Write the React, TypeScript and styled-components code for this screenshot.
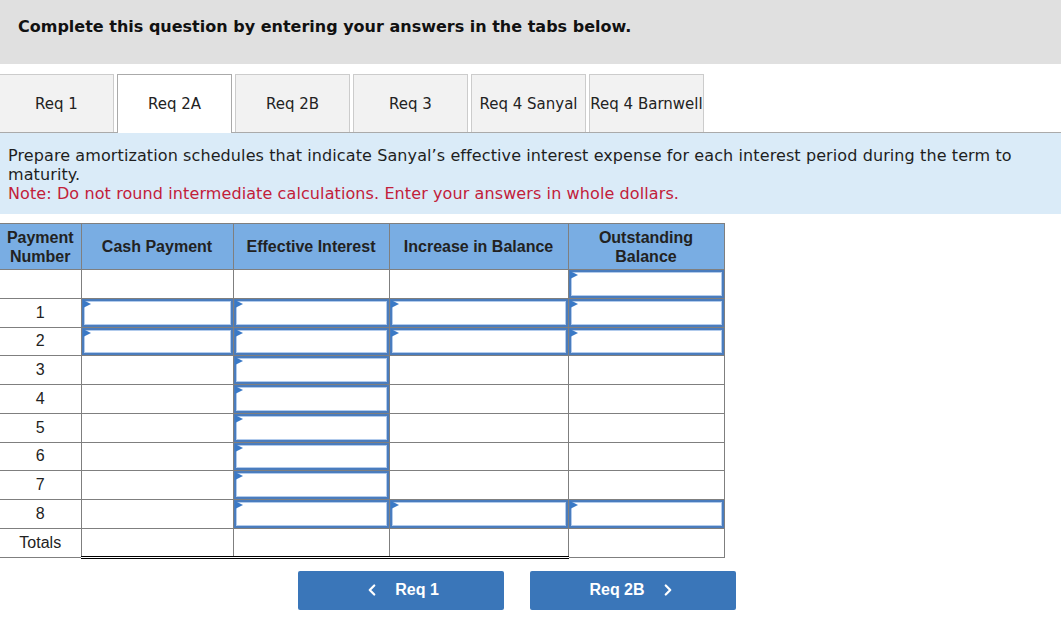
import React from "react";
import styled, { createGlobalStyle, css } from "styled-components";
import { ChevronLeft, ChevronRight } from "lucide-react";

const GlobalStyle = createGlobalStyle`
  html, body { margin: 0; padding: 0; background: #fff; }
  body { font-family: "DejaVu Sans", Verdana, sans-serif; color: #222; }
  * { box-sizing: border-box; }
`;

const Header = styled.div`
  background: #e0e0e0;
  height: 64px;
  padding: 17px 18px 0;
`;

const Title = styled.h1`
  margin: 0;
  font-family: "DejaVu Sans", Verdana, sans-serif;
  font-size: 16px;
  line-height: 20px;
  font-weight: bold;
  color: #111;
`;

const TabBar = styled.div`
  display: flex;
  gap: 3px;
  margin-top: 10px;
  margin-left: -1px;
  height: 59px;
  border-bottom: 1px solid #aaa;
`;

const Tab = styled.div<{ $active?: boolean }>`
  width: 115px;
  height: 58px;
  display: flex;
  align-items: center;
  justify-content: center;
  font-size: 15px;
  color: #222;
  white-space: nowrap;
  border: 1px solid #ccc;
  border-bottom: none;
  background: #f2f2f2;
  ${(p) =>
    p.$active &&
    css`
      background: #fff;
      border-color: #aaa;
      height: 59px;
    `}
`;

const Instructions = styled.div`
  background: #daebf8;
  padding: 13px 8px 11px 8px;
  font-size: 16px;
  line-height: 19px;
  letter-spacing: 0.1px;
  color: #1e1e1e;
`;

const Note = styled.div`
  color: #c2203a;
`;

const Table = styled.table`
  margin-top: 9px;
  border-collapse: collapse;
  table-layout: fixed;
  font-family: "Liberation Sans", Arial, sans-serif;
  width: 724px;
`;

const Th = styled.th`
  background: #79ade3;
  border: 1px solid #7f7f7f;
  height: 46px;
  font-size: 16px;
  font-weight: bold;
  color: #222;
  line-height: 19px;
  padding: 0 2px;
  &:first-child { border-left: none; }
`;

const Td = styled.td<{ $total?: boolean }>`
  border: 1px solid #7f7f7f;
  height: 28.75px;
  padding: 0;
  font-size: 16px;
  color: #222;
  text-align: center;
  vertical-align: middle;
  &:first-child { border-left: none; }
  ${(p) =>
    p.$total &&
    css`
      border-top: 1px solid #000;
      border-bottom: 3px double #000;
    `}
`;

const Field = styled.div`
  position: relative;
  height: 27.75px;
  border: 2px solid #4a7cbd;
  box-shadow: inset 0 0 0 1px #b2cbec;
  background: #fff;
`;

const Flag = styled.span`
  position: absolute;
  top: -1px;
  left: -1px;
  width: 0;
  height: 0;
  border-top: 4.5px solid transparent;
  border-bottom: 4.5px solid transparent;
  border-left: 8px solid #3a79c6;
`;

const Nav = styled.div`
  display: flex;
  gap: 26px;
  margin: 12px 0 0 298px;
`;

const NavButton = styled.button`
  width: 206px;
  height: 39px;
  border: none;
  border-radius: 2px;
  background: #3a76b9;
  color: #fff;
  font-family: "Liberation Sans", Arial, sans-serif;
  font-weight: bold;
  font-size: 16px;
  display: flex;
  align-items: center;
  justify-content: center;
  gap: 14px;
  cursor: pointer;
`;

const Input = () => (
  <Field>
    <Flag />
  </Field>
);

type RowSpec = { label: string; cells: boolean[] };

const rows: RowSpec[] = [
  { label: "", cells: [false, false, false, true] },
  { label: "1", cells: [true, true, true, true] },
  { label: "2", cells: [true, true, true, true] },
  { label: "3", cells: [false, true, false, false] },
  { label: "4", cells: [false, true, false, false] },
  { label: "5", cells: [false, true, false, false] },
  { label: "6", cells: [false, true, false, false] },
  { label: "7", cells: [false, true, false, false] },
  { label: "8", cells: [false, true, true, true] },
];

const tabs = ["Req 1", "Req 2A", "Req 2B", "Req 3", "Req 4 Sanyal", "Req 4 Barnwell"];

export default function App() {
  return (
    <>
      <GlobalStyle />
      <Header>
        <Title>Complete this question by entering your answers in the tabs below.</Title>
      </Header>
      <TabBar>
        {tabs.map((t) => (
          <Tab key={t} $active={t === "Req 2A"}>
            {t}
          </Tab>
        ))}
      </TabBar>
      <Instructions>
        Prepare amortization schedules that indicate Sanyal’s effective interest expense for each interest period during the term to maturity.
        <Note>Note: Do not round intermediate calculations. Enter your answers in whole dollars.</Note>
      </Instructions>
      <Table>
        <colgroup>
          <col style={{ width: 81 }} />
          <col style={{ width: 152 }} />
          <col style={{ width: 156 }} />
          <col style={{ width: 179 }} />
          <col style={{ width: 156 }} />
        </colgroup>
        <thead>
          <tr>
            <Th>Payment Number</Th>
            <Th>Cash Payment</Th>
            <Th>Effective Interest</Th>
            <Th>Increase in Balance</Th>
            <Th>Outstanding Balance</Th>
          </tr>
        </thead>
        <tbody>
          {rows.map((r, i) => (
            <tr key={i}>
              <Td>{r.label}</Td>
              {r.cells.map((c, j) => (
                <Td key={j}>{c ? <Input /> : null}</Td>
              ))}
            </tr>
          ))}
          <tr>
            <Td>Totals</Td>
            <Td $total />
            <Td $total />
            <Td $total />
            <Td />
          </tr>
        </tbody>
      </Table>
      <Nav>
        <NavButton>
          <ChevronLeft size={18} strokeWidth={3} />
          <span>Req 1</span>
        </NavButton>
        <NavButton>
          <span>Req 2B</span>
          <ChevronRight size={18} strokeWidth={3} />
        </NavButton>
      </Nav>
    </>
  );
}
